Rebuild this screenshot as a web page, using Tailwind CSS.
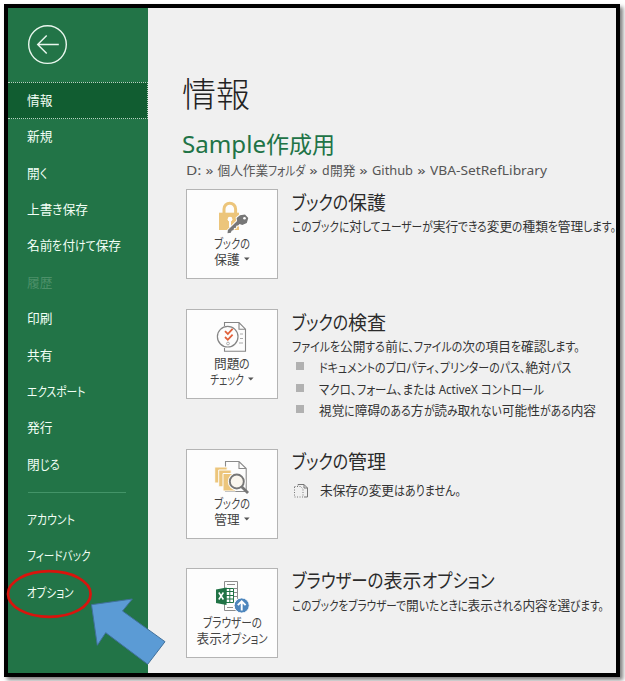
<!DOCTYPE html>
<html lang="ja">
<head>
<meta charset="utf-8">
<title>情報</title>
<script src="https://cdn.jsdelivr.net/npm/@tailwindcss/browser@4"></script>
</head>
<body class="w-[625px] h-[681px] overflow-hidden bg-white p-1 font-['Noto_Sans','Noto_Sans_CJK_JP',sans-serif] text-[12.7px] text-[#333] whitespace-nowrap [font-feature-settings:'palt']">
<div class="relative w-[616px] h-[673px] border-4 border-black bg-[#f0f0f0] flex shadow-[3px_3px_4px_rgba(0,0,0,0.5)]">

  <nav class="w-[140px] shrink-0 bg-[#227447] text-[#f2fff6] flex flex-col">
    <div class="h-[74px] pl-5 pt-[17px] shrink-0">
      <svg class="w-10 h-10" viewBox="0 0 40 40" fill="none" stroke="#e9f7ee" stroke-width="1.4"><circle cx="19.5" cy="19.6" r="18.8"/><path d="M30.8 19.5H10M18.7 10.5L9.7 19.5L18.7 28.5"/></svg>
    </div>
    <div class="h-[36.5px] shrink-0 bg-[#115d31] border border-l-0 border-dotted border-[#b9d3c3] pl-[19px] flex items-center"><span data-w="26">情報</span></div>
    <div class="h-[36.4px] shrink-0 pl-[19px] flex items-center"><span data-w="26">新規</span></div>
    <div class="h-[36.4px] shrink-0 pl-[19px] flex items-center"><span data-w="20">開く</span></div>
    <div class="h-[36.4px] shrink-0 pl-[19px] flex items-center"><span data-w="61">上書き保存</span></div>
    <div class="h-[36.4px] shrink-0 pl-[19px] flex items-center"><span data-w="94">名前を付けて保存</span></div>
    <div class="h-[36.4px] shrink-0 pl-[19px] flex items-center text-[#4c9069]"><span data-w="26">履歴</span></div>
    <div class="h-[36.4px] shrink-0 pl-[19px] flex items-center"><span data-w="26">印刷</span></div>
    <div class="h-[36.4px] shrink-0 pl-[19px] flex items-center"><span data-w="26">共有</span></div>
    <div class="h-[36.4px] shrink-0 pl-[19px] flex items-center"><span data-w="58.5">エクスポート</span></div>
    <div class="h-[36.4px] shrink-0 pl-[19px] flex items-center"><span data-w="26">発行</span></div>
    <div class="h-[36.4px] shrink-0 pl-[19px] flex items-center"><span data-w="32.5">閉じる</span></div>
    <div class="h-px w-[98px] ml-[19.5px] mt-[10px] mb-[8px] shrink-0 bg-[#439468]"></div>
    <div class="h-[36.4px] shrink-0 pl-[19px] flex items-center"><span data-w="48">アカウント</span></div>
    <div class="h-[36.4px] shrink-0 pl-[19px] flex items-center"><span data-w="63.5">フィードバック</span></div>
    <div class="h-[36.4px] shrink-0 pl-[19px] flex items-center"><span data-w="46.5">オプション</span></div>
  </nav>

  <main class="w-[468px] pl-[34px] flex flex-col">
    <h1 class="mt-[60px] h-[52px] leading-[52px] text-[34px] font-light text-[#222]">情報</h1>
    <h2 class="h-[31px] leading-[31px] mt-[9px] text-[23px] text-[#217346]"><span data-w="153">Sample作成用</span></h2>
    <p class="h-[18px] leading-[18px] mt-[1px] pl-[4px] text-[#555]"><span data-w="31.5">D: » </span><span data-w="88">個人作業フォルダ</span><span data-w="17"> » </span><span data-w="33">d開発</span><span data-w="17"> » </span><span data-w="41">Github</span><span data-w="17"> » </span><span data-w="117">VBA-SetRefLibrary</span></p>

    <section class="h-[120px] mt-[10px] pl-1 flex">
      <div class="w-[92px] h-[90px] shrink-0 bg-[#fdfdfd] border border-[#b4b4b4] pt-[10px] flex flex-col items-center leading-4 text-[#444]">
        <svg class="w-9 h-9 -mb-px shrink-0" viewBox="0 0 36 36" fill="none"><path d="M10 13V9a5.8 5.8 0 0 1 11.6 0v4" stroke="#ecc57b" stroke-width="3"/><path d="M5 12.7h20V30H5z" fill="#ecc57b"/><circle cx="16" cy="19.2" r="2.4" fill="#fff"/><path d="M15 20h2v7h-2z" fill="#fff"/><path d="M26 15.2l5-.7 3.3 3.5-1.5 5-4.5 2-2.7-1-1.5 1.6-1.8.2-.3 2-2 .3-.4 2-2 .6-.7 2-3.4.6.4-3.2 9.2-9.2-.5-3z" fill="#777" stroke="#fff" stroke-width="1.8" paint-order="stroke"/><circle cx="30.5" cy="18.3" r="1.3" fill="#fff"/></svg>
        <span data-w="36">ブックの</span>
        <div class="flex items-center gap-[4px]"><span data-w="26">保護</span><svg class="w-[6px] h-[4px]" viewBox="0 0 6 4"><path d="M0 .5h5.6L2.8 3.5z" fill="#555"/></svg></div>
      </div>
      <div class="pl-[14px]">
        <h3 class="h-[26px] leading-[28px] text-[19px] text-[#2b2b2b]"><span data-w="94">ブックの保護</span></h3>
        <p class="h-6 leading-[22px]"><span data-w="324">このブックに対してユーザーが実行できる変更の種類を管理します。</span></p>
      </div>
    </section>

    <section class="h-[139.5px] pl-1 flex">
      <div class="w-[92px] h-[90px] shrink-0 bg-[#fdfdfd] border border-[#b4b4b4] pt-[10px] flex flex-col items-center leading-4 text-[#444]">
        <svg class="w-9 h-9 -mb-px shrink-0" viewBox="0 0 36 36" fill="none"><path d="M10.5 6V2.5H25l6.5 6.7v22h-21V28M25 2.5v6.7h6.5" stroke="#858585" stroke-width="1.1"/><path d="M26 14h3M26 18.5h3M25 23h4" stroke="#aaa"/><circle cx="13.7" cy="16.7" r="10.3" fill="#fdfdfd" stroke="#858585" stroke-width="1.2"/><path d="M11 11.2l2.8 2.8 4.8-5.2M11 17l2.8 2.8 4.8-5.2" stroke="#e0613b" stroke-width="1.8"/><circle cx="14" cy="23.5" r="1.4" stroke="#999" stroke-width=".8"/></svg>
        <span data-w="36">問題の</span>
        <div class="flex items-center gap-[4px]"><span data-w="34">チェック</span><svg class="w-[6px] h-[4px]" viewBox="0 0 6 4"><path d="M0 .5h5.6L2.8 3.5z" fill="#555"/></svg></div>
      </div>
      <div class="pl-[14px]">
        <h3 class="h-[26px] leading-[28px] text-[19px] text-[#2b2b2b]"><span data-w="94">ブックの検査</span></h3>
        <p class="h-[22px] leading-[22px]"><span data-w="288">ファイルを公開する前に、ファイルの次の項目を確認します。</span></p>
        <ul class="pl-1 leading-[20px]">
          <li class="flex h-[21.7px]"><i class="w-2 h-2 mt-[5px] bg-[#b1b1b1] mr-[15px]"></i><span data-w="252">ドキュメントのプロパティ、プリンターのパス、絶対パス</span></li>
          <li class="flex h-[21.7px]"><i class="w-2 h-2 mt-[5px] bg-[#b1b1b1] mr-[15px]"></i><span data-w="225">マクロ、フォーム、または ActiveX コントロール</span></li>
          <li class="flex h-[21.7px]"><i class="w-2 h-2 mt-[5px] bg-[#b1b1b1] mr-[15px]"></i><span data-w="277">視覚に障碍のある方が読み取れない可能性がある内容</span></li>
        </ul>
      </div>
    </section>

    <section class="h-[119.5px] pl-1 flex">
      <div class="w-[92px] h-[90px] shrink-0 bg-[#fdfdfd] border border-[#b4b4b4] pt-[10px] flex flex-col items-center leading-4 text-[#444]">
        <svg class="w-9 h-9 -mb-px shrink-0" viewBox="0 0 36 36" fill="none"><path d="M11.5 1.5H25l7.2 7v23H11.5zM25 1.5v7h7.2" stroke="#8a8a8a" stroke-width="1.1" fill="#fdfdfd"/><g fill="#ecc57b" stroke="#fdfdfd" stroke-width="1"><path d="M.7 7h12.5v16H.7z"/><path d="M4.7 10h12.5v16.8H4.7z"/><path d="M9 13.5h12.5V31H9z"/></g><circle cx="22.8" cy="21.5" r="7" fill="#f4f4f4" stroke="#fdfdfd" stroke-width="4"/><path d="M27.7 26.7l6.3 6.3" stroke="#777" stroke-width="2.8"/><circle cx="22.8" cy="21.5" r="7" fill="#faf6ee" stroke="#777" stroke-width="1.9"/></svg>
        <span data-w="36">ブックの</span>
        <div class="flex items-center gap-[4px]"><span data-w="26">管理</span><svg class="w-[6px] h-[4px]" viewBox="0 0 6 4"><path d="M0 .5h5.6L2.8 3.5z" fill="#555"/></svg></div>
      </div>
      <div class="pl-[14px]">
        <h3 class="h-[26px] leading-[27px] text-[19px] text-[#2b2b2b]"><span data-w="94">ブックの管理</span></h3>
        <div class="flex items-center h-8 pl-[2px]">
          <svg class="w-[15px] h-[14px] mr-[11px]" viewBox="0 0 15 14" fill="none" stroke="#777"><path d="M4 1.5v-1h6l3.5 3.5v9H10M10 .5v3.5h3.5"/><path d="M.5 2.5h6l2.5 2.5v8H.5z" stroke-dasharray="1 1.5"/></svg>
          <span data-w="141">未保存の変更はありません。</span>
        </div>
      </div>
    </section>

    <section class="h-[90px] pl-1 flex">
      <div class="w-[92px] h-[90px] shrink-0 bg-[#fdfdfd] border border-[#b4b4b4] pt-[10px] flex flex-col items-center leading-4 text-[#444]">
        <svg class="w-9 h-9 -mb-px shrink-0" viewBox="0 0 36 36" fill="none"><path d="M10.5 2.5h13v29h-13zM13 5.5h8M20 9.5h3M20 13.5h3M20 17.5h3M13 28.5h6" stroke="#8c8c8c"/><path d="M12 9.5h7.5v14H12z" fill="#fff" stroke="#217346"/><path d="M12 12.5h7M12 16.5h7M12 20h7M15.8 10v13" stroke="#217346"/><path d="M2 10.5L12.5 8.5v17.5L2 24z" fill="#217346"/><path d="M4.8 13.5l4.6 7M9.4 13.5l-4.6 7" stroke="#fff" stroke-width="1.5"/><circle cx="27.7" cy="26.5" r="7.6" fill="#4d86bd" stroke="#fdfdfd" stroke-width="1"/><path d="M27.7 31.5v-8.5M23.8 26.2l3.9-3.9 3.9 3.9" stroke="#fff" stroke-width="1.9"/></svg>
        <span data-w="59">ブラウザーの</span>
        <span data-w="71">表示オプション</span>
      </div>
      <div class="pl-[14px]">
        <h3 class="h-[26px] leading-[27px] text-[19px] text-[#2b2b2b]"><span data-w="202">ブラウザーの表示オプション</span></h3>
        <p class="h-6 leading-[22px]"><span data-w="312">このブックをブラウザーで開いたときに表示される内容を選びます。</span></p>
      </div>
    </section>
  </main>

  <svg class="absolute left-[-4px] top-[556px] w-[176px] h-[109px]" viewBox="4 564 176 109" fill="none">
    <ellipse cx="49.3" cy="594" rx="41.3" ry="22.8" stroke="#d9140d" stroke-width="2.7"/>
    <path d="M91.5 604.7L132.3 599L122.5 611L165 641.7L147.7 664.3L105.7 632.7L97.3 645.3z" fill="#5b9bd5" stroke="#41719c" stroke-width="1"/>
  </svg>
</div>
<script>
// Keeps kanji at full width and condenses the kana and Latin runs so each label fills data-w pixels.
var labels = [];
document.querySelectorAll('[data-w]').forEach(function (el) {
  var parts = el.textContent.match(/[\u4e00-\u9fff]+|[^\u4e00-\u9fff]+/g);
  var label = { width: parseFloat(el.dataset.w), fixed: [], flex: [] };
  el.textContent = '';
  parts.forEach(function (t) {
    var s = document.createElement('span');
    s.textContent = t;
    s.style.whiteSpace = 'pre';
    s.style.display = 'inline-block';
    s.style.transformOrigin = '0 50%';
    el.appendChild(s);
    (/[\u4e00-\u9fff]/.test(t) ? label.fixed : label.flex).push(s);
  });
  labels.push(label);
});
// Computed widths ignore the transform, so this can be repeated whenever the styles change.
function widthOf(s) { return parseFloat(getComputedStyle(s).width); }
function sum(list) { return list.reduce(function (a, s) { return a + widthOf(s); }, 0); }
function fit() {
  labels.forEach(function (l) {
    if (!l.flex.length) return;
    var k = (l.width - sum(l.fixed)) / sum(l.flex);
    l.flex.forEach(function (s) {
      s.style.transform = 'scaleX(' + k + ')';
      s.style.marginRight = widthOf(s) * (k - 1) + 'px';
    });
  });
}
fit();
window.addEventListener('load', fit);
var observer = new ResizeObserver(fit);
labels.forEach(function (l) { l.flex.concat(l.fixed).forEach(function (s) { observer.observe(s); }); });
</script>
</body>
</html>
